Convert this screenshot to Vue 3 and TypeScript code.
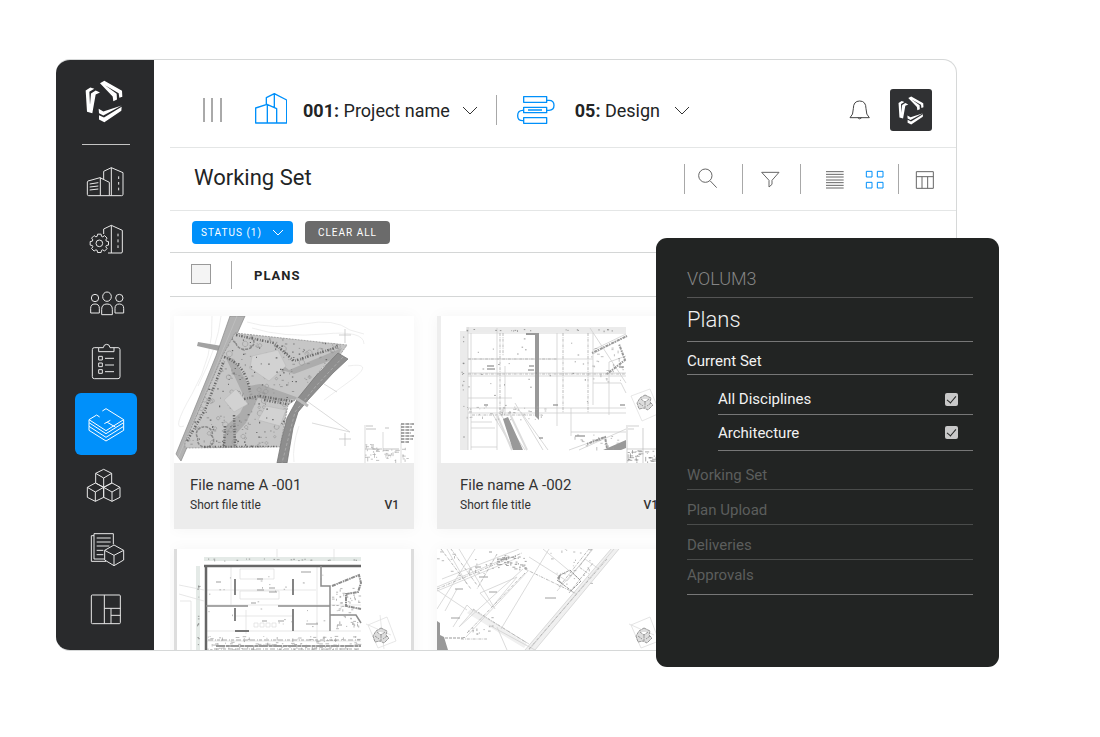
<script setup lang="ts">
import { ref } from 'vue'

interface PlanFile {
  name: string
  title: string
  version: string
  art: 'site' | 'grid' | 'walls' | 'diagonal'
}

const files: PlanFile[] = [
  { name: 'File name A -001', title: 'Short file title', version: 'V1', art: 'site' },
  { name: 'File name A -002', title: 'Short file title', version: 'V1', art: 'grid' },
  { name: '', title: '', version: '', art: 'walls' },
  { name: '', title: '', version: '', art: 'diagonal' },
]

const sections: string[] = ['Working Set', 'Plan Upload', 'Deliveries', 'Approvals']
const allSelected = ref(false)
const allDisciplines = ref(true)
const architecture = ref(true)

const logoMark =
  'M107 119L121 110L133 114L118 123L120 162L123 128L137 119L150 125L137 131L127 187L111 183Z' +
  'M150 97L163 90L216 120L217 138L208 141L206 127L165 103L200 129L201 146L190 151L188 137Z' +
  'M146 174L160 182L215 164L160 194L147 187ZM147 193L162 200L215 168L214 180L163 214L147 206Z'

const stampMark =
  'M0 -7L6 -4L5 0L8 3L3 8L-1 6L-6 7L-8 1L-5 -4ZM-4 -3L0 0L4 -3M0 0V6M-6 1L-2 4M6 1L2 4'

function gear(cx: number, cy: number): string {
  const points: string[] = []
  for (let i = 0; i < 8; i++) {
    const base = (i * Math.PI) / 4
    const steps: [number, number][] = [[-0.3, 22], [-0.19, 28], [0.19, 28], [0.3, 22]]
    for (const [turn, radius] of steps) {
      const a = base + turn
      points.push(`${(cx + radius * Math.cos(a)).toFixed(1)} ${(cy + radius * Math.sin(a)).toFixed(1)}`)
    }
  }
  return `M${points.join('L')}Z`
}

function generator(seed: number): () => number {
  let s = seed
  return () => {
    s = (s * 16807) % 2147483647
    return s / 2147483647
  }
}

// Short annotation ticks scattered over a rectangle of a drawing.
function ticks(seed: number, n: number, x: number, y: number, w: number, h: number, len = 3): string {
  const next = generator(seed)
  let d = ''
  for (let i = 0; i < n; i++) {
    const px = (x + next() * w).toFixed(1)
    const py = (y + next() * h).toFixed(1)
    const l = (0.8 + next() * len).toFixed(1)
    d += `M${px} ${py}${next() > 0.3 ? 'h' : 'v'}${l}`
  }
  return d
}

function trees(seed: number, n: number, x: number, y: number, w: number, h: number): string {
  const next = generator(seed)
  let d = ''
  for (let i = 0; i < n; i++) {
    const r = 1 + next() * 2
    d += `M${(x + next() * w).toFixed(1)} ${(y + next() * h).toFixed(1)}a${r.toFixed(1)} ${r.toFixed(1)} 0 1 0 .1 0`
  }
  return d
}

const siteOutline = 'M61 17L173 29L166 39L148 52L128 79L114 89L106 131L11 132L11 126L49 39Z'
const gearPath = gear(148, 580)
</script>

<template>
  <div class="stage">
    <div class="window">
      <aside class="sidebar">
        <svg class="brand" viewBox="105 88 114 128" role="img" aria-label="Volum3"><path :d="logoMark" /></svg>
        <hr class="brand-line" />
        <nav class="nav" aria-label="Modules">
          <button type="button" aria-label="Buildings">
            <svg viewBox="75 297 186 183">
              <path d="M112 396Q112 394 114 393L150 383L178 397V437H116Q112 437 112 433ZM151 383V437M161 388V364L184 353L219 368V433Q219 437 215 437H178M184 353V437M119 402L145 398M119 411L145 408M119 420L145 417M206 379V387M206 396V404M206 413V421" />
            </svg>
          </button>
          <button type="button" aria-label="Settings">
            <svg viewBox="75 480 186 183">
              <path d="M161 552V537L184 526L217 541V606Q217 609 213 609H174M184 526V609M204 551V559M204 568V577M204 586V594" />
              <path class="knockout" :d="gearPath" /><circle cx="148" cy="580" r="10" />
            </svg>
          </button>
          <button type="button" aria-label="People">
            <svg viewBox="75 33 186 183">
              <ellipse cx="171" cy="110" rx="13" ry="14" /><circle cx="135" cy="114" r="11" /><circle cx="208" cy="114" r="11" />
              <path d="M155 164V148Q155 132 171 132Q187 132 187 148V164ZM122 159V145Q122 132 135 132Q148 132 148 145V159ZM195 159V145Q195 132 208 132Q221 132 221 145V159Z" />
            </svg>
          </button>
          <button type="button" aria-label="Tasks">
            <svg viewBox="75 216 186 183">
              <path d="M146 263H133Q127 263 127 269V350Q127 356 133 356H204Q210 356 210 350V269Q210 263 204 263H192M146 275V263H160Q161 253 170 253Q179 253 180 263H192V275ZM146 289H157V300H146ZM146 309H157V320H146ZM146 329H157V340H146ZM165 295H192M165 315H192M165 335H192" />
            </svg>
          </button>
          <button type="button" class="active" aria-label="Plans" aria-current="page">
            <svg viewBox="75 399 186 186">
              <path d="M149 471L140 465L117 479L168 512L221 479L168 446L157 453M163 491L181 481M172 487L196 501M117 479V488L168 521L221 488V479M117 488V499L168 532L221 499V488M117 499V511L168 543L221 511V499" />
            </svg>
          </button>
          <button type="button" aria-label="Models">
            <svg viewBox="75 0 186 183">
              <path d="M161 43L185 55V84L161 97L137 84V55ZM137 55L161 69L185 55M161 69V97M136 84L161 97V127L136 139L112 127V97ZM112 97L136 111L161 97M136 111V139M186 84L210 97V127L186 139L161 127V97ZM161 97L186 111L210 97M186 111V139" />
            </svg>
          </button>
          <button type="button" aria-label="Reports">
            <svg viewBox="75 183 186 183">
              <path d="M190 268V236H132V312H163M132 242H124V319H168M140 249H182M140 261H182M140 273H178M140 286H160M140 299H160M192 270L221 286V315L192 332L164 315V286ZM164 286L192 301L221 286M192 301V332" />
            </svg>
          </button>
          <button type="button" aria-label="Dashboard">
            <svg viewBox="75 366 186 183">
              <rect x="124" y="420" width="87" height="86" rx="3" /><path d="M163 420V506M163 460H211M183 460V506M183 481H211" />
            </svg>
          </button>
        </nav>
      </aside>

      <main class="main">
        <header class="topbar">
          <button type="button" class="plain" aria-label="Menu">
            <svg class="bars" viewBox="0 0 20 26"><path d="M1 1V25M9 1V25M18 1V25" /></svg>
          </button>
          <button type="button" class="picker project" aria-haspopup="listbox">
            <svg class="building" viewBox="225 66 96 93">
              <path d="M227 111L261 100L290 113V156H227ZM262 100V156M259 100V80L283 68L320 87V156H290M283 68V108" />
            </svg>
            <span><b>001:</b> Project name</span>
            <svg class="chevron" viewBox="0 0 16 10"><path d="M1 1L8 8L15 1" /></svg>
          </button>
          <i class="divider"></i>
          <button type="button" class="picker phase" aria-haspopup="listbox">
            <svg class="stack" viewBox="47 78 114 84">
              <path d="M67 80H136V97H67ZM67 112H136V128H67ZM67 143H136V160H67ZM80 120H122M136 91H143Q158 91 158 106Q158 121 143 121H136M67 121H64Q49 121 49 137Q49 152 64 152H67" />
            </svg>
            <span><b>05:</b> Design</span>
            <svg class="chevron" viewBox="0 0 16 10"><path d="M1 1L8 8L15 1" /></svg>
          </button>
          <button type="button" class="plain bell" aria-label="Notifications">
            <svg viewBox="1045 92 63 60"><path d="M1048 145Q1058 137 1058 118Q1058 95 1077 95Q1096 95 1096 118Q1096 137 1106 145ZM1071 145Q1077 152 1083 145" /></svg>
          </button>
          <button type="button" class="avatar" aria-label="Account">
            <svg viewBox="105 88 114 128"><path :d="logoMark" /></svg>
          </button>
        </header>

        <div class="titlebar">
          <h1>Working Set</h1>
          <div class="tools">
            <i class="divider"></i>
            <button type="button" aria-label="Search"><svg viewBox="555 279 171 96"><path d="M631 333L650 353" /><circle cx="616" cy="317" r="20" /></svg></button>
            <i class="divider"></i>
            <button type="button" aria-label="Filter"><svg viewBox="729 279 171 96"><path d="M785 307H837L816 331V343L807 351V331Z" /></svg></button>
            <i class="divider"></i>
            <button type="button" aria-label="List view"><svg viewBox="903 279 159 96"><path d="M978 305H1031M978 313H1031M978 321H1031M978 330H1031M978 338H1031M978 346H1031M978 354H1031" /></svg></button>
            <button type="button" class="on" aria-label="Grid view" aria-pressed="true"><svg viewBox="1062 279 132 96"><path d="M1099 304H1116V321H1099ZM1132 304H1149V321H1132ZM1099 337H1116V354H1099ZM1132 337H1149V354H1132Z" /></svg></button>
            <i class="divider"></i>
            <button type="button" aria-label="Table view"><svg viewBox="1197 279 171 96"><path d="M1249 305H1300V355H1249ZM1249 320H1300M1266 320V355M1283 320V355" /></svg></button>
          </div>
        </div>

        <div class="filters">
          <button type="button" class="chip status">STATUS (1)<svg viewBox="0 0 12 8"><path d="M1 1L6 6L11 1" /></svg></button>
          <button type="button" class="chip clear">CLEAR ALL</button>
        </div>

        <div class="list-head">
          <input v-model="allSelected" type="checkbox" aria-label="Select all plans" />
          <i class="divider"></i>
          <h2>PLANS</h2>
        </div>

        <section class="cards">
          <article v-for="file in files" :key="file.art" class="card" :class="file.art">
            <svg v-if="file.art === 'site'" class="drawing" viewBox="0 0 240 147">
              <clipPath id="site-clip"><path :d="siteOutline" /></clipPath>
              <g fill="none" stroke="#e6e6e6" stroke-width=".7">
                <path d="M73 6Q100 14 130 8T176 14L190 18M78 12Q110 22 150 18T190 28M38 0Q40 40 18 78T10 110M47 0Q44 30 24 70M174 50Q200 46 180 62L150 84M125 110Q118 130 120 146" />
                <path d="M138 107L176 116L130 83M150 68L163 76" stroke="#ccc" />
                <path d="M165 19H177M171 13V27M165 123H177M171 117V130" stroke="#bbb" />
              </g>
              <path d="M24 26L48 30L45 35L23 30Z" fill="#a2a2a2" />
              <path d="M56 0H71L51 45L7 145L2 138L42 40Z" fill="#b2b2b2" stroke="#888" stroke-width=".7" />
              <path d="M63 0L4 142" stroke="#c6c6c6" stroke-width=".6" />
              <path :d="siteOutline" fill="#c6c6c6" stroke="#888" stroke-width=".7" stroke-dasharray="2 1" />
              <g clip-path="url(#site-clip)" fill="none">
                <path d="M51 40L60 43L75 70L86 68L125 82L104 86L84 82L72 107L62 118L61 134H48L52 110L66 97L72 85ZM92 36L115 54L168 32L163 42L120 58L90 48Z" fill="#acacac" />
                <path :d="trees(11, 110, 8, 15, 165, 120)" stroke="#999" stroke-width=".6" />
                <path :d="ticks(81, 260, 8, 15, 160, 118, 2)" stroke="#8e8e8e" stroke-width=".8" />
                <path d="M78 40L104 34L112 50L95 65L76 52ZM62 73L74 88L60 96L50 84ZM92 90L112 94L106 110L84 104Z" fill="#d2d2d2" stroke="#b5b5b5" stroke-width=".5" />
                <path d="M62 27a9 7 0 1 0 16 -5a10 7 0 1 0 -16 5M24 122a8 7 0 1 0 14 -2a8 7 0 1 0 -14 2" stroke="#888" stroke-width="1.500" stroke-dasharray="3 1" />
                <path d="M50 41Q72 48 76 76M62 19L100 27L120 45L164 31M90 84L123 90L108 108M13 125L31 94L50 45M70 83L85 80L122 86M60 99L61 130M51 110L50 130M30 131H104" stroke="#666" stroke-width="2.500" stroke-dasharray="1.500 1.800 .7 1.300" />
                <path :d="ticks(29, 130, 8, 15, 160, 118, 1)" stroke="#666" stroke-width="1.200" />
              </g>
              <path d="M164 37L174 43L159 57L134 84L124 96L119 112L113 147H103L108 122L113 102L124 82L141 61Z" fill="#8e8e8e" stroke="#777" stroke-width=".8" />
              <path d="M169 41L142 70L121 96L108 147" fill="none" stroke="#b5b5b5" stroke-width=".7" stroke-dasharray="3 2" />
              <path d="M122 82L134 90" stroke="#bbb" stroke-width="3" />
              <g fill="none" stroke="#aaa" stroke-width=".7">
                <path d="M191 109V147M209 116V136M227 108V147" stroke="#ccc" />
                <path :d="ticks(6, 26, 191, 128, 12, 17, 4)" /><path :d="ticks(8, 22, 209, 134, 13, 11, 4)" />
                <path :d="ticks(17, 8, 228, 130, 8, 14, 3)" />
                <path d="M192 110H199M192 113H202M211 112H215M191 133H208M209 133H225" />
                <path d="M227 108H240M227 111H238M227 114H240M227 117H237M227 120H240M227 123H239M227 126H235" stroke="#888" stroke-width="1.500" stroke-dasharray="3 .6 1 .5" />
              </g>
            </svg>

            <svg v-else-if="file.art === 'grid'" class="drawing" viewBox="0 0 240 147">
              <path d="M0 0H4V147H0Z" fill="#eee" />
              <path d="M29 11H189V16H31V134H23V15H29Z" fill="#ebebeb" />
              <g fill="none" stroke="#cfcfcf" stroke-width=".8">
                <path d="M31 11V134M34 17V134M31 17H189M31 43H156M31 57H189M31 60H189M31 82H75M31 92H189M31 97H189M60 12V134M68 50V100M120 17V110M156 17V89M172 60V99M134 92V120M134 116H189M34 106H55M34 112H58M34 131H60" />
                <path d="M153 12L189 67M156 38L189 20M156 34L189 18M172 46L189 40M172 46V60M156 67H184L189 77M55 97L77 134M62 96L88 134M78 87L106 134M84 96L111 134M132 134L168 121M142 134L189 113" />
                <path d="M63 17V98M126 17V97M151 17V97M66 17V40M31 58H189M31 43H120M35 99H105" stroke="#aaa" stroke-dasharray="3 1 .7 1" />
                <path d="M60 99L75 134M72 96L90 134" stroke="#ddd" stroke-width="2" />
              </g>
              <path d="M98 17H102V104L98 100ZM89 17H98V19H89ZM66 103L71 101L86 134H76ZM166 134L189 124V132L184 134Z" fill="#999" />
              <path d="M155 37L190 20M170 58L188 44L182 28M150 128L168 121L170 132" fill="none" stroke="#999" stroke-width="2" stroke-dasharray="1.500 1 3 .8" />
              <g fill="none" stroke="#a5a5a5" stroke-width=".7">
                <path :d="ticks(16, 50, 30, 90, 78, 14, 2)" /><path :d="ticks(40, 25, 154, 32, 32, 34, 3)" />
                <path :d="ticks(52, 20, 30, 13, 156, 2, 1)" stroke="#777" /><path :d="ticks(56, 12, 25, 18, 2, 110, 1)" stroke="#777" />
                <path :d="ticks(5, 28, 32, 20, 154, 76, 1)" stroke="#777" /><path :d="ticks(9, 20, 138, 118, 48, 14, 3)" />
                <path d="M50 50H57M50 53H58M92 50H97M91 54H97M138 120H148M116 89H121M182 51H187M47 89H51M102 122H106M183 89H188" stroke="#777" stroke-width="1.200" />
                <path :d="ticks(60, 24, 190, 134, 12, 12, 4)" stroke="#888" /><path :d="ticks(62, 22, 208, 134, 22, 12, 4)" stroke="#888" />
                <path d="M190 109V147M206 112V147M191 110H202M191 113H197M190 133H234" stroke="#bbb" />
                <path d="M194 80L213 73L223 97L205 105Z" stroke="#ddd" />
              </g>
              <g transform="translate(208 86)"><path :d="stampMark" fill="#ddd" stroke="#999" stroke-width="1" stroke-dasharray="3 .6" /></g>
            </svg>

            <svg v-else-if="file.art === 'walls'" class="drawing" viewBox="0 0 240 147">
              <path d="M30 8H187V12H30ZM22 17H26V101H22Z" fill="#e4eae7" />
              <g fill="none" stroke="#dcdcdc" stroke-width=".7">
                <path d="M103 0V8M5 36L30 41M5 45L30 52M6 52H17V101M57 17V56M187 92H32M32 82H187M66 20H100V30H66ZM66 42H105V50H66ZM72 61V85M60 67H118M32 56H187M32 41H142M143 17V95M160 0V12" />
                <path d="M80 74h4v4h-4zM86 74h4v4h-4zM92 74h4v4h-4zM98 74h4v4h-4z" />
              </g>
              <path d="M30 17H187M32 17V101" fill="none" stroke="#666" stroke-width="2.500" />
              <path d="M61 30V46M119 30V46M61 59V72M61 82H75M119 60V82" fill="none" stroke="#777" stroke-width="1.800" />
              <path d="M32 57H74M104 57H156M147 17V37H156V82M156 66H182L187 74" fill="none" stroke="#8c8c8c" stroke-width="1.500" />
              <path d="M158 37L185 26L187 34L184 43L172 45V57L187 60" fill="none" stroke="#8c8c8c" stroke-width="2" stroke-dasharray="4 .8 1.500 .6" />
              <path d="M42 97H187" stroke="#999" stroke-width="2" stroke-dasharray="9 .8 4 .5" />
              <path d="M34 91H187M40 100H187" fill="none" stroke="#aaa" stroke-width="1.200" stroke-dasharray="5 2 1 1 3 2" />
              <g fill="none" stroke="#999" stroke-width=".7">
                <path :d="ticks(22, 130, 34, 87, 150, 14, 3)" /><path :d="ticks(23, 22, 34, 10, 150, 2, 1)" stroke="#777" />
                <path :d="ticks(25, 60, 158, 38, 27, 42, 2)" /><path :d="ticks(26, 28, 35, 20, 115, 60, 1)" />
                <path :d="ticks(36, 14, 23, 18, 2, 80, 1)" stroke="#777" />
                <path d="M83 30H89M83 41H90M95 39H101M95 43H103M88 72H93M104 72H110M132 75H144M42 33H47M127 23H137M77 54H82M163 76H168" stroke="#777" />
                <path d="M194 76L213 68L222 92L204 99ZM192 75L217 86M206 66L210 100" stroke="#ddd" />
              </g>
              <g transform="translate(207 86)"><path :d="stampMark" fill="#ddd" stroke="#999" stroke-width="1" stroke-dasharray="3 .6" /></g>
            </svg>

            <svg v-else class="drawing" viewBox="0 0 240 147">
              <path d="M88 101L174 0H182L98 101ZM34 60L90 95L87 99L30 64Z" fill="#f0f0f0" />
              <g fill="none" stroke="#d2d2d2" stroke-width=".8">
                <path d="M88 101L174 0M98 101L182 0M92 101L177 0M0 42L78 10M0 38L72 8M5 30L82 0M112 0L64 80M38 0L0 60M10 0L30 35M22 0L58 60M43 44L80 28L55 58L43 44M23 77L86 20M29 88L91 22M0 41L30 61M34 60L92 95M22 78L36 62L30 56L16 78M60 78L70 101M52 76L98 101M20 40L8 62M92 8L130 32L156 0M106 0L142 30M120 42L148 10L162 20" />
                <path d="M4 0L34 40M14 0L40 36M0 40L85 4M36 60L90 94M30 84L88 24M122 38L152 0M132 44L156 14M92 100L170 10M24 90H50M88 20L140 45M60 5L40 40M155 0L142 18L152 25" stroke="#aaa" stroke-dasharray="3 1 .8 1" />
                <path :d="ticks(71, 22, 0, 1, 60, 26, 3)" stroke="#aaa" /><path :d="ticks(78, 26, 114, 0, 40, 38, 2)" stroke="#aaa" />
                <path :d="ticks(74, 42, 60, 4, 28, 16, 3)" stroke="#8c8c8c" /><path :d="ticks(75, 14, 26, 66, 30, 26, 2)" stroke="#999" />
                <path d="M42 28H51M18 40H26M52 43H60M108 49H119M14 69H23M52 3H55M60 10H70M38 18H44" stroke="#888" />
                <path d="M194 76L213 68L222 92L204 99ZM192 75L217 86" stroke="#ddd" />
              </g>
              <path d="M0 72L3 74V86L7 88L11 101H0ZM120 29L127 36L122 33L124 24Z" fill="#999" />
              <path d="M0 89H26M120 31L136 43M122 27L133 21L144 32L134 42" fill="none" stroke="#999" stroke-dasharray="3 1" />
              <g transform="translate(207 86)"><path :d="stampMark" fill="#ddd" stroke="#999" stroke-width="1" stroke-dasharray="3 .6" /></g>
            </svg>

            <footer v-if="file.name">
              <h3>{{ file.name }}</h3>
              <p><span>{{ file.title }}</span><b>{{ file.version }}</b></p>
            </footer>
          </article>
        </section>
      </main>
    </div>

    <aside class="panel">
      <p class="product">VOLUM3</p>
      <h2>Plans</h2>
      <h3>Current Set</h3>
      <div class="disciplines">
        <label><span>All Disciplines</span><input v-model="allDisciplines" type="checkbox" /></label>
        <label><span>Architecture</span><input v-model="architecture" type="checkbox" /></label>
      </div>
      <nav aria-label="Plan sections">
        <a v-for="section in sections" :key="section" href="#">{{ section }}</a>
      </nav>
    </aside>
  </div>
</template>

<style>
body {
  margin: 0;
  background: #fff;
}
</style>

<style scoped>
* {
  box-sizing: border-box;
}
.stage {
  position: relative;
  height: 100vh;
  min-height: 700px;
  padding: 59px 143px 86px 56px;
  overflow: hidden;
  font-family: Roboto, "Liberation Sans", sans-serif;
  color: #222425;
}
button {
  padding: 0;
  border: 0;
  background: none;
  color: inherit;
  font: inherit;
  cursor: pointer;
}
svg {
  display: block;
  fill: none;
}
h1, h2, h3, p {
  margin: 0;
  font-weight: 400;
}
.window {
  display: flex;
  height: 100%;
  overflow: hidden;
  border: 1px solid #d6d8d8;
  border-left: 0;
  border-radius: 14px;
  background: #fff;
}
.sidebar {
  display: flex;
  flex: none;
  flex-direction: column;
  width: 98px;
  padding: 20px 17px 0 19px;
  background: #292a2c;
}
.brand {
  flex: none;
  width: 38px;
  height: 43px;
  margin-left: 10px;
}
.brand path, .avatar path {
  fill: #fff;
}
.brand-line {
  width: 48px;
  height: 1px;
  margin: 21px auto 4px;
  border: 0;
  background: #c4c4c4;
}
.nav button {
  display: block;
  width: 62px;
  height: 61px;
  border-radius: 6px;
}
.nav button.active {
  height: 62px;
  background: #0090fa;
}
.nav svg {
  width: 100%;
  height: 100%;
  stroke: #e8e8e8;
  stroke-width: 3;
  stroke-linejoin: round;
}
.nav .active svg {
  stroke: #fff;
}
.nav .knockout {
  fill: #292a2c;
}
.main {
  display: flex;
  flex: 1;
  flex-direction: column;
  min-width: 0;
  padding-left: 16px;
}
.topbar {
  display: flex;
  flex: none;
  align-items: center;
  height: 88px;
  padding: 13px 24px 0 33px;
  border-bottom: 1px solid #e4e6e6;
}
.divider {
  flex: none;
  width: 1px;
  height: 30px;
  background: #a8a8a8;
}
.bars {
  width: 20px;
  height: 26px;
  stroke: #555;
}
.picker {
  display: flex;
  align-items: center;
  font-size: 18px;
  line-height: 24px;
  white-space: nowrap;
}
.project {
  gap: 14px;
  margin: 0 18px 0 32px;
}
.phase {
  gap: 14px;
  margin-left: 20px;
}
.picker span {
  padding: 2px 0 0 2px;
}
.phase span {
  padding: 1px 0 0 6px;
}
.project .chevron {
  margin-left: -2px;
}
.building {
  width: 32px;
  height: 31px;
}
.stack {
  width: 38px;
  height: 28px;
}
.building, .stack {
  margin-bottom: 4px;
  stroke: #0090fa;
  stroke-width: 4;
  stroke-linejoin: round;
}
.stack {
  margin-bottom: 0;
}
.chevron {
  width: 16px;
  height: 10px;
  margin-top: 2px;
  stroke: #333;
}
.bell {
  margin-left: auto;
}
.bell svg {
  width: 21px;
  height: 20px;
  stroke: #444;
  stroke-width: 3;
}
.avatar {
  display: grid;
  place-items: center;
  width: 42px;
  height: 42px;
  margin-left: 20px;
  border-radius: 3px;
  background: #303133;
}
.avatar svg {
  width: 26px;
  height: 29px;
}
.titlebar {
  display: flex;
  flex: none;
  align-items: center;
  justify-content: space-between;
  height: 63px;
  padding-left: 24px;
  border-bottom: 1px solid #e4e6e6;
}
h1 {
  padding-bottom: 2px;
  font-size: 22px;
  line-height: 28px;
}
.tools {
  display: flex;
  align-items: center;
}
.tools svg {
  height: 32px;
  stroke: #666;
  stroke-width: 3;
}
.tools .on svg {
  stroke: #0090fa;
}
.filters {
  display: flex;
  flex: none;
  align-items: center;
  gap: 12px;
  height: 42px;
  padding: 2px 0 0 22px;
  border-bottom: 1px solid #d4d6d6;
}
.chip {
  display: flex;
  align-items: center;
  justify-content: center;
  height: 23px;
  border-radius: 4px;
  color: #fff;
  font-size: 10px;
  letter-spacing: 1px;
}
.status {
  gap: 10px;
  width: 101px;
  background: #0090fa;
}
.status svg {
  width: 12px;
  height: 8px;
  stroke: #fff;
}
.clear {
  width: 85px;
  background: #6b6b6b;
}
.list-head {
  display: flex;
  flex: none;
  align-items: center;
  height: 44px;
  padding-left: 21px;
  border-bottom: 1px solid #d4d6d6;
}
.list-head input {
  width: 20px;
  height: 20px;
  margin: 0 20px 2px 0;
  border: 1px solid #999;
  background: #f4f4f4;
  appearance: none;
}
.list-head input:checked {
  background: #0090fa;
}
.list-head .divider {
  height: 28px;
}
.list-head h2 {
  margin-left: 22px;
  padding-top: 2px;
  font-size: 13px;
  font-weight: 700;
  letter-spacing: 1px;
}
.cards {
  display: grid;
  flex: 1;
  grid-template-columns: repeat(2, 240px);
  grid-auto-rows: max-content;
  gap: 20px 23px;
  min-height: 0;
  padding: 19px 4px 0;
  overflow: hidden;
  background: #fefefe;
}
.card {
  overflow: hidden;
  background: #fff;
  box-shadow: 0 0 14px rgba(0, 0, 0, 0.04);
}
.drawing {
  width: 100%;
}
.card.walls {
  background: linear-gradient(90deg, #ddd 3px, #fff 3px, #fff 237px, #ddd 237px);
}
footer {
  padding: 13px 15px 16px 16px;
  background: #ececec;
  color: #333;
}
.card.grid footer {
  padding-right: 19px;
  padding-left: 23px;
}
footer h3 {
  font-size: 15px;
  line-height: 18px;
}
footer p {
  display: flex;
  justify-content: space-between;
  padding-top: 3px;
  font-size: 12px;
  line-height: 16px;
}
footer b {
  font-weight: 500;
}
.panel {
  position: absolute;
  top: 238px;
  right: 101px;
  width: 343px;
  padding: 29px 26px 72px 31px;
  border-radius: 11px;
  background: #222423;
  color: #f2f2f2;
}
.product {
  padding-bottom: 6px;
  border-bottom: 1px solid #555;
  color: #858585;
  font-size: 18px;
  font-weight: 300;
  line-height: 24px;
}
.panel h2 {
  padding: 8px 0 7px;
  border-bottom: 1px solid #777;
  font-size: 22px;
  font-weight: 300;
  line-height: 28px;
}
.panel h3 {
  padding: 9px 0 3px;
  border-bottom: 1px solid #777;
  font-size: 15px;
  line-height: 20px;
}
.disciplines {
  padding: 4px 0 4px 31px;
}
.disciplines label {
  display: flex;
  align-items: center;
  justify-content: space-between;
  height: 36px;
  padding: 5px 15px 0 0;
  border-bottom: 1px solid #777;
  font-size: 15px;
  line-height: 16px;
}
.disciplines label:last-child {
  padding-top: 0;
}
.disciplines input {
  display: grid;
  place-items: center;
  width: 13px;
  height: 13px;
  margin: 0;
  border-radius: 2px;
  background: #c8c8c8;
  appearance: none;
}
.disciplines input:checked::after {
  width: 4px;
  height: 8px;
  margin-bottom: 2px;
  border: solid #222423;
  border-width: 0 1px 1px 0;
  content: "";
  transform: rotate(40deg);
}
.panel nav a {
  display: flex;
  align-items: flex-end;
  height: 35px;
  padding-bottom: 6px;
  border-bottom: 1px solid #4a4c4b;
  color: #5c5e5d;
  font-size: 15px;
  line-height: 16px;
  text-decoration: none;
}
.panel nav a:last-child {
  padding-bottom: 11px;
  border-color: #777;
}
</style>
